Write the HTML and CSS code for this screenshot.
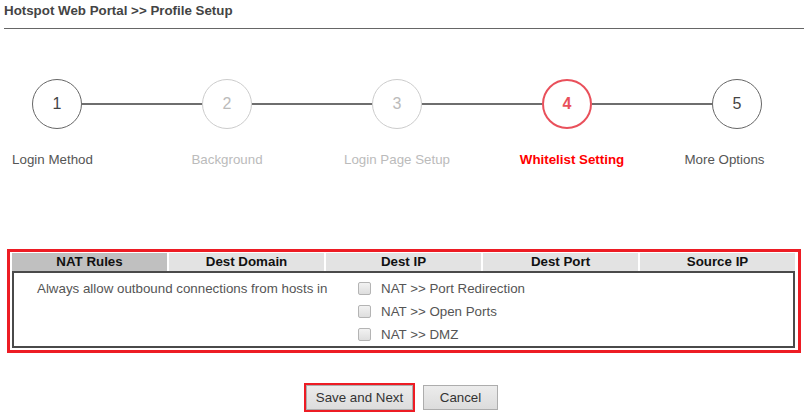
FILE: index.html
```html
<!DOCTYPE html>
<html>
<head>
<meta charset="utf-8">
<link rel="stylesheet" href="styles.css">
</head>
<body>
<div class="page">
  <div class="title">Hotspot Web Portal &gt;&gt; Profile Setup</div>

  <div class="stepper">
    <div class="step step-done">
      <div class="circle">1</div>
      <div class="label label-first">Login Method</div>
    </div>
    <div class="connector"></div>
    <div class="step step-muted">
      <div class="circle">2</div>
      <div class="label">Background</div>
    </div>
    <div class="connector"></div>
    <div class="step step-muted">
      <div class="circle">3</div>
      <div class="label">Login Page Setup</div>
    </div>
    <div class="connector"></div>
    <div class="step step-active">
      <div class="circle">4</div>
      <div class="label label-active">Whitelist Setting</div>
    </div>
    <div class="connector"></div>
    <div class="step step-done">
      <div class="circle">5</div>
      <div class="label label-last">More Options</div>
    </div>
  </div>

  <div class="whitelist">
    <div class="tabs">
      <div class="tab tab-active">NAT Rules</div>
      <div class="tab">Dest Domain</div>
      <div class="tab">Dest IP</div>
      <div class="tab">Dest Port</div>
      <div class="tab">Source IP</div>
    </div>
    <div class="panel">
      <div class="panel-desc">Always allow outbound connections from hosts in</div>
      <div class="options">
        <label class="option"><input type="checkbox" class="check"><span>NAT &gt;&gt; Port Redirection</span></label>
        <label class="option"><input type="checkbox" class="check"><span>NAT &gt;&gt; Open Ports</span></label>
        <label class="option"><input type="checkbox" class="check"><span>NAT &gt;&gt; DMZ</span></label>
      </div>
    </div>
  </div>

  <div class="actions">
    <button class="btn btn-primary">Save and Next</button>
    <button class="btn btn-cancel">Cancel</button>
  </div>
</div>
</body>
</html>
```

FILE: styles.css
```css
html, body {
  margin: 0;
  padding: 0;
  background: #ffffff;
}

body {
  font-family: "Liberation Sans", Arial, sans-serif;
  font-size: 13.33px;
  color: #555;
}

.page {
  padding: 0 4px;
}

.title {
  padding-top: 3px;
  padding-bottom: 10px;
  line-height: 15px;
  font-weight: bold;
  color: #444;
  border-bottom: 1px solid #666;
}

/* Stepper */
.stepper {
  display: flex;
  align-items: flex-start;
  padding-left: 28px;
  margin-top: 50px;
}

.step {
  width: 50px;
  display: flex;
  flex-direction: column;
  align-items: center;
}

.circle {
  box-sizing: border-box;
  width: 50px;
  height: 50px;
  border-radius: 50%;
  border: 1px solid #666;
  display: flex;
  align-items: center;
  justify-content: center;
  font-size: 16px;
  color: #444;
}

.step-muted .circle {
  border-color: #cccccc;
  color: #bbbbbb;
}

.step-active .circle {
  border: 2px solid #e9505b;
  color: #e9505b;
  font-weight: bold;
}

.connector {
  width: 120px;
  height: 2px;
  background: #6e6e6e;
  margin-top: 24px;
}

.label {
  margin-top: 23px;
  line-height: 15px;
  white-space: nowrap;
  color: #555;
}

.step-muted .label {
  color: #bbbbbb;
}

.label-active {
  color: #ff0000;
  font-weight: bold;
  margin-left: 10px;
}

.label-first {
  margin-right: 9px;
}

.label-last {
  margin-right: 25px;
}

/* Whitelist table */
.whitelist {
  margin: 82px 3px 0 3px;
  border: 3px solid #ed1c24;
  padding: 1px 3px 2px 2px;
}

.tabs {
  display: flex;
  gap: 2px;
}

.tab {
  flex: 1;
  height: 18px;
  line-height: 18px;
  text-align: center;
  font-weight: bold;
  color: #111;
  background: #e3e3e3;
}

.tab-active {
  background: #c0c0c0;
}

.panel {
  border: 2px solid #4a4a4a;
  padding-top: 4px;
  display: flex;
  align-items: flex-start;
}

.panel-desc {
  width: 321px;
  padding-left: 23px;
  line-height: 23px;
  color: #555;
}

.options {
  display: flex;
  flex-direction: column;
}

.option {
  display: flex;
  align-items: center;
  height: 23px;
  color: #555;
}

.check {
  appearance: none;
  -webkit-appearance: none;
  box-sizing: border-box;
  width: 13px;
  height: 13px;
  margin: 0 10px 0 0;
  border: 1px solid #b4b4b4;
  border-radius: 2px;
  background: linear-gradient(#f2f2f2, #dedede);
}

/* Buttons */
.actions {
  margin-top: 30px;
  display: flex;
  justify-content: center;
  align-items: center;
  gap: 8px;
  padding-right: 6px;
}

.btn {
  box-sizing: border-box;
  font-family: "Liberation Sans", Arial, sans-serif;
  font-size: 13.33px;
  color: #333;
  background: linear-gradient(#ececec, #dcdcdc);
  border: 1px solid #adadad;
  padding: 0;
  margin: 0;
}

.btn-primary {
  width: 111px;
  height: 29px;
  border: 2px solid #ed1c24;
  box-shadow: inset 0 0 0 1px #adadad;
}

.btn-cancel {
  width: 75px;
  height: 25px;
}
```
